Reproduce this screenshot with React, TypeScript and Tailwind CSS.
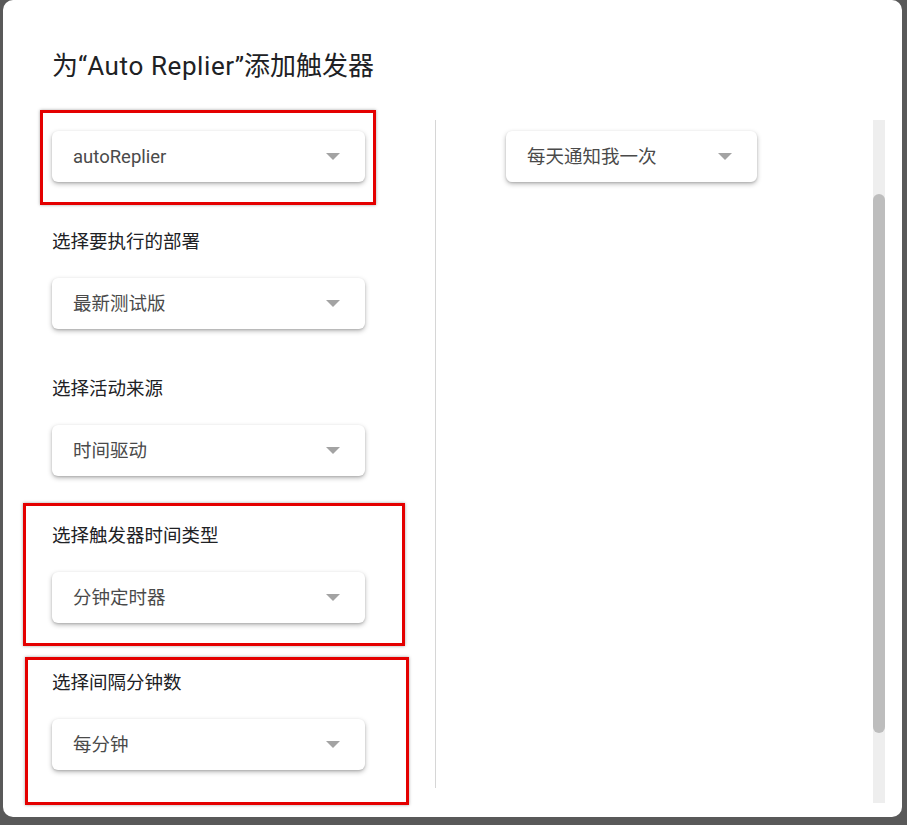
const FONT = '"Roboto", "Noto Sans CJK SC", "Noto Sans", sans-serif'

function Caret() {
  return (
    <span className="block w-0 h-0 border-l-[7px] border-r-[7px] border-t-[7px] border-l-transparent border-r-transparent border-t-[#a3a3a3]" />
  )
}

function Select({ value, width }: { value: string; width: string }) {
  return (
    <div
      className={`${width} h-[51px] flex items-center justify-between pl-[21px] pr-[25px] bg-white rounded-[6px] shadow-[0_2px_5px_rgba(0,0,0,0.28),0_1px_2px_rgba(0,0,0,0.12)]`}
    >
      <span className="text-[18.5px] text-[#4a4a4a] leading-6">{value}</span>
      <Caret />
    </div>
  )
}

function Section({ label, value }: { label: string; value: string }) {
  return (
    <div className="mt-[48px]">
      <div className="h-6 text-[18.5px] leading-6 text-[#202124]">{label}</div>
      <div className="mt-6">
        <Select value={value} width="w-[313px]" />
      </div>
    </div>
  )
}

// red annotation boxes drawn over the dialog
function Mark({ className }: { className: string }) {
  return (
    <div
      className={`absolute border-[3px] border-[#e40000] shadow-[0_0_3px_rgba(0,0,0,0.35)] pointer-events-none ${className}`}
    />
  )
}

export default function App() {
  return (
    <div className="h-[825px] w-full bg-[#595959] pl-[3px] pr-[5px] pb-[8px]" style={{ fontFamily: FONT }}>
      <div className="relative h-full bg-white rounded-[10px] overflow-hidden">
        <h1 className="pl-[49px] pt-[50px] h-[120px] text-[26px] leading-8 text-[#202124]">
          为“<span className="tracking-[0.6px]">Auto Replier</span>”添加触发器
        </h1>

        <div className="flex h-[683px]">
          {/* left column */}
          <div className="w-[432px] pl-[49px] pt-[11px]">
            <Select value="autoReplier" width="w-[313px]" />
            <Section label="选择要执行的部署" value="最新测试版" />
            <Section label="选择活动来源" value="时间驱动" />
            <Section label="选择触发器时间类型" value="分钟定时器" />
            <Section label="选择间隔分钟数" value="每分钟" />
          </div>

          <div className="w-px h-[668px] bg-[#d6d6d6]" />

          {/* right column */}
          <div className="pl-[70px] pt-[11px]">
            <Select value="每天通知我一次" width="w-[251px]" />
          </div>

          {/* scrollbar */}
          <div className="ml-auto mr-[17px] w-[12px] h-full bg-[#eeeeee]">
            <div className="mt-[74px] h-[539px] bg-[#bdbdbd] rounded-full" />
          </div>
        </div>

        <Mark className="left-[37px] top-[110px] w-[336px] h-[95px]" />
        <Mark className="left-[20px] top-[503px] w-[382px] h-[143px]" />
        <Mark className="left-[22px] top-[657px] w-[384px] h-[148px]" />
      </div>
    </div>
  )
}
